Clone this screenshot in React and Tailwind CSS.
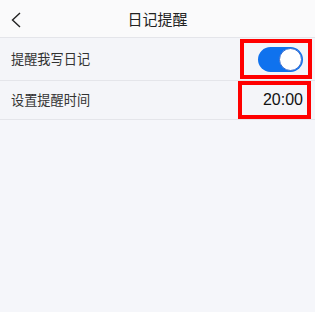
export default function App() {
  const font = { fontFamily: '"Noto Sans CJK SC", "Liberation Sans", sans-serif' };
  return (
    <div className="w-[315px] h-[312px] bg-[#f5f6fa] text-[#222]" style={font}>
      <header className="h-[38px] flex items-center relative bg-[#fafafb] border-b border-[#e4e5ea]">
        <svg className="ml-[11px] mt-[2px]" width="10" height="16" viewBox="0 0 10 16" fill="none">
          <path d="M9 1 L1.5 8 L9 15" stroke="#222" strokeWidth="1.4" />
        </svg>
        <div className="absolute inset-x-0 text-center text-[15px] leading-none pointer-events-none">日记提醒</div>
      </header>

      <div className="h-[43px] flex items-center justify-between pl-[11px] pr-[3px] border-b border-[#e4e5ea] bg-[#f4f5f9]">
        <span className="text-[13.2px] text-[#333]">提醒我写日记</span>
        <div className="w-[72px] h-[40px] border-[4px] border-[#ff0000] flex items-center justify-end pr-[5px]">
          <div className="w-[45px] h-[25px] rounded-full bg-[#0f72ee] flex items-center justify-end pr-[1px]">
            <div className="w-[23px] h-[23px] rounded-full bg-white border border-[#3b6fd0]" />
          </div>
        </div>
      </div>

      <div className="h-[39px] flex items-center justify-between pl-[11px] pr-[4px] border-b border-[#e4e5ea] bg-[#f4f5f9]">
        <span className="text-[13.2px] text-[#333]">设置提醒时间</span>
        <div className="w-[73px] h-[38px] border-[4px] border-[#ff0000] flex items-center justify-end pr-[4px]">
          <span className="text-[16px] text-[#111]" style={{ fontFamily: '"Liberation Sans", sans-serif' }}>20:00</span>
        </div>
      </div>
    </div>
  );
}
